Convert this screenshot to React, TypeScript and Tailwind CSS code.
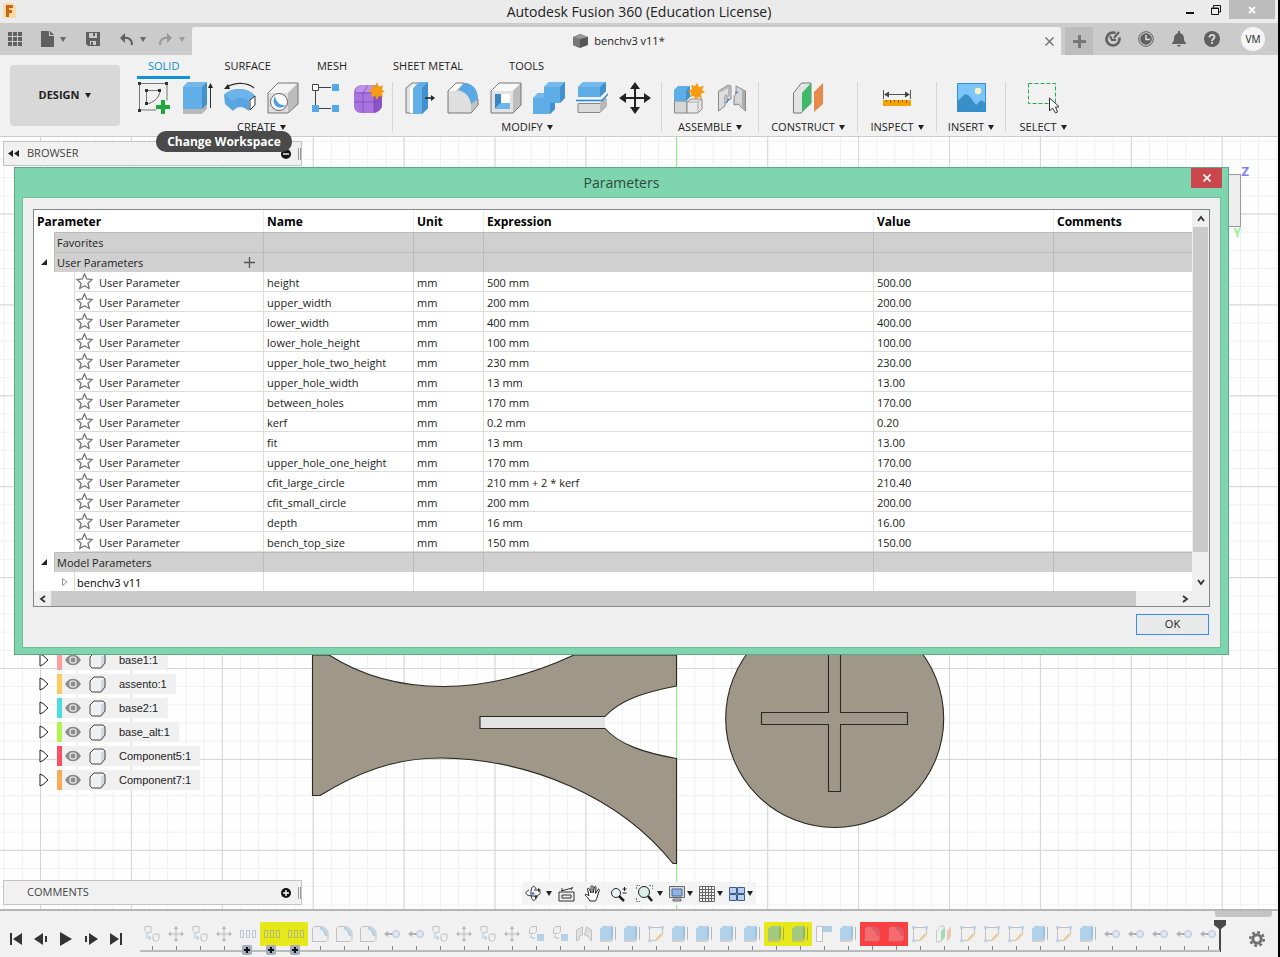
import React from "react";
import type { ReactNode } from "react";

/* ---------- data ---------- */

type Param = { name: string; expression: string; value: string };

const userParameters: Param[] = [
  { name: "height", expression: "500 mm", value: "500.00" },
  { name: "upper_width", expression: "200 mm", value: "200.00" },
  { name: "lower_width", expression: "400 mm", value: "400.00" },
  { name: "lower_hole_height", expression: "100 mm", value: "100.00" },
  { name: "upper_hole_two_height", expression: "230 mm", value: "230.00" },
  { name: "upper_hole_width", expression: "13 mm", value: "13.00" },
  { name: "between_holes", expression: "170 mm", value: "170.00" },
  { name: "kerf", expression: "0.2 mm", value: "0.20" },
  { name: "fit", expression: "13 mm", value: "13.00" },
  { name: "upper_hole_one_height", expression: "170 mm", value: "170.00" },
  { name: "cfit_large_circle", expression: "210 mm + 2 * kerf", value: "210.40" },
  { name: "cfit_small_circle", expression: "200 mm", value: "200.00" },
  { name: "depth", expression: "16 mm", value: "16.00" },
  { name: "bench_top_size", expression: "150 mm", value: "150.00" },
];

const components = [
  { name: "base1:1", color: "bg-[#ff9d9f]" },
  { name: "assento:1", color: "bg-[#ffcb5c]" },
  { name: "base2:1", color: "bg-[#4bdbe0]" },
  { name: "base_alt:1", color: "bg-[#b2f24e]" },
  { name: "Component5:1", color: "bg-[#fb5064]" },
  { name: "Component7:1", color: "bg-[#fbab55]" },
];

/* ---------- small pieces ---------- */

const Caret = ({ className = "text-[#222]" }: { className?: string }) => (
  <svg className={className} width="6" height="5" viewBox="0 0 6 5" aria-hidden="true">
    <path d="M0 0h6L3 5z" fill="currentColor" />
  </svg>
);

const Icon = ({ children }: { children: ReactNode }) => (
  <svg width="32" height="32" viewBox="0 0 32 32" fill="none" aria-hidden="true">
    {children}
  </svg>
);

/* ---------- ribbon icons ---------- */

const SketchIcon = () => (
  <Icon>
    <path d="M2 1.500h27v17M1.500 2v26h17M8 8.500h14M8.500 8v14" stroke="#777" />
    <path d="M22 8c0 7-6 13-14 14" stroke="#666" />
    <path d="M0 0h3v3H0zM27 0h3v3h-3zM0 27h3v3H0zM7 7h3v3H7zM20 7h3v3h-3zM7 20h3v3H7z" fill="#333" />
    <path d="M23 18h4v5h5v4h-5v5h-4v-5h-5v-4h5z" fill="#1fa83c" />
  </Icon>
);
const ExtrudeIcon = () => (
  <Icon>
    <path d="M2 26h19l5-5v6l-5 5H2z" fill="#b9b9b9" />
    <path d="M2 5l5-5h19v22l-5 5H2z" fill="#62aee6" />
    <path d="M2 5l5-5h19l-5 5z" fill="#75b8ea" />
    <path d="M21 5l5-5v22l-5 5z" fill="#4291cc" />
    <path d="M29.500 3v23" stroke="#333" />
    <path d="M27 6l2.500-5L32 6z" fill="#222" />
  </Icon>
);
const RevolveIcon = () => (
  <Icon>
    <path d="M0 13c8-8 24-8 31 1l-6 5v10l-3-2c-4-3-9-3-13 2L1 22z" fill="#58a6df" />
    <path d="M0 13c8-8 24-8 31 1l-6 5c-5-4-12-4-16 0z" fill="#6cb3e9" />
    <path d="M26 18l5-4v9l-5 5z" fill="#fff" stroke="#333" />
    <path d="M3 5C11 0 23 0 30 6" stroke="#333" strokeWidth="1.200" />
    <path d="M0 7l4-5 2 5z" fill="#222" />
  </Icon>
);
const HoleIcon = () => (
  <Icon>
    <path d="M1 11L11 1h20v21L21 31H1z" fill="#dedede" />
    <path d="M1 11L11 1h20L21 11z" fill="#f3f3f3" />
    <path d="M21 11L31 1v21L21 31z" fill="#bcbcbc" />
    <path d="M1 11L11 1h20v21L21 31H1z" stroke="#777" />
    <circle cx="12" cy="20" r="8.500" fill="#fff" stroke="#666" />
    <path d="M8 14a7 7 0 1 0 11 9c-6 1-10-3-11-9z" fill="#4c9fdc" />
  </Icon>
);
const PatternIcon = () => (
  <Icon>
    <path d="M9 5.500h12M9 26.500h12M5.500 9v14" stroke="#444" />
    <path d="M2.500 2.500h6v6h-6z" fill="#fff" stroke="#444" />
    <path d="M22 2h7v7h-7zM2 23h7v7H2zM22 23h7v7h-7z" fill="#55a7e6" />
  </Icon>
);
const FormIcon = () => (
  <Icon>
    <path d="M1 10c0-4 4-7 8-7h13c4 0 7 3 7 7v13c0 4-4 8-9 8H8c-4 0-7-3-7-7z" fill="#a873de" />
    <path d="M2 10c1-4 4-7 8-7h12l-3 7z" fill="#bd92ea" />
    <path d="M21 12l8-4v15c0 4-4 7-8 8z" fill="#8a53c8" />
    <path d="M1 20h20l8-5M10 11v20M21 11v20M2 11h19l5-5M10 11l5-8" stroke="#7c49b8" strokeWidth=".7" />
    <path d="M24 0l2 5 4-2-1 5 3 1-3 2 1 4-4-1-2 4-2-4-4 1 1-4-4-2 4-1-1-5 4 2z" fill="#f59b14" />
  </Icon>
);
const PressPullIcon = () => (
  <Icon>
    <path d="M2 6l6-5h9v30H2z" fill="#e3e3e3" stroke="#777" />
    <path d="M6 7l5-6v30H6z" fill="#fff" />
    <path d="M9 6l7-6h8v26l-6 6H9z" fill="#62aee6" />
    <path d="M18 6l6-6v26l-6 6z" fill="#4291cc" />
    <path d="M21 16h7" stroke="#222" strokeWidth="1.500" />
    <path d="M27 13l4 3-4 3z" fill="#222" />
  </Icon>
);
const FilletIcon = () => (
  <Icon>
    <path d="M1 9l8-8h8c8 0 14 7 14 16v6l-7 8H1z" fill="#c4c4c4" />
    <path d="M1 9h8c9 0 15 6 15 14v8H1z" fill="#dfdfdf" />
    <path d="M9 1h8L9 9H1z" fill="#fafafa" />
    <path d="M17 1c9 0 14 7 14 16l-7 5C23 15 18 9 11 8z" fill="#5aa9e4" />
    <path d="M17 1H9L1 9v22h23l7-8v-6" stroke="#777" />
  </Icon>
);
const ShellIcon = () => (
  <Icon>
    <path d="M1 9l8-8h22v22l-8 8H1z" fill="#e2e2e2" />
    <path d="M1 9l8-8h22l-8 8z" fill="#f8f8f8" />
    <path d="M23 9l8-8v22l-8 8z" fill="#bdbdbd" />
    <path d="M1 9l8-8h22v22l-8 8H1z" stroke="#777" />
    <path d="M5 12h15v15H5z" fill="#fff" />
    <path d="M5 12h6v9l-6 6z" fill="#3a86c4" />
    <path d="M5 27l6-6h9v6z" fill="#6db6ec" />
  </Icon>
);
const CombineIcon = () => (
  <Icon>
    <path d="M0 16l5-5h6V5l5-5h16v16l-5 5h-5v6l-5 5H0z" fill="#5fade7" />
    <path d="M0 16l5-5h6v5zM11 5l5-5h16l-5 5z" fill="#74b9ec" />
    <path d="M27 5l5-5v16l-5 5zM17 21h5v6l-5 5z" fill="#4291cc" />
  </Icon>
);
const SplitIcon = () => (
  <Icon>
    <path d="M2 5l5-5h23v9l-6 6H2z" fill="#5fade7" />
    <path d="M2 5l5-5h23l-6 5z" fill="#74b9ec" />
    <path d="M24 5l6-5v9l-6 6z" fill="#4291cc" />
    <path d="M0 18.500h26L32 12" stroke="#1b86dc" strokeWidth="1.300" />
    <path d="M2 21.500h22l6-5v8l-6 6H2z" fill="#dadada" stroke="#888" />
    <path d="M24 21.500l6-5v8l-6 6z" fill="#b8b8b8" />
  </Icon>
);
const MoveIcon = () => (
  <Icon>
    <path d="M16 4v24M4 16h24" stroke="#222" strokeWidth="2" />
    <path d="M16 0l5 7H11zM16 32l5-7H11zM0 16l7-5v10zM32 16l-7-5v10z" fill="#222" />
  </Icon>
);
const NewComponentIcon = () => (
  <Icon>
    <path d="M1.500 19v12H14V19z" fill="#d5d5d5" stroke="#888" />
    <path d="M14 20l4-3h11v10l-4 4H14z" fill="#e8e8e8" stroke="#888" />
    <path d="M14 20h11l4-3M25 20v11" stroke="#aaa" />
    <path d="M1 8l4-4h12v11l-4 4H1z" fill="#5fade7" />
    <path d="M13 8l4-4v11l-4 4z" fill="#4291cc" />
    <path d="M24 1l2 4 5-1-2 4 3 2-4 2 1 4-4-1-2 3-2-4-4 1 1-4-3-2 4-2-1-4 4 1z" fill="#f59b14" />
  </Icon>
);
const JointIcon = () => (
  <Icon>
    <path d="M2.500 9L12 3l3 1v13l-4 1v-4c0-2-2-1-2 1v9l-6.500 5z" fill="#dedede" stroke="#888" />
    <path d="M5 10l7-4v9l3-1V4l-3-1-9 6z" fill="#b5b5b5" />
    <path d="M29.500 9L20 4v8c-1 1-2 2-2 4v7l4-1 7.500 7z" fill="#d5d5d5" stroke="#888" />
    <path d="M26 8v18l3 3V9z" fill="#adadad" />
    <path d="M13 17l-3 4M19 11l3-1" stroke="#3879dc" strokeWidth="1.300" />
  </Icon>
);
const PlaneIcon = () => (
  <Icon>
    <path d="M1.500 11l8-10H19v20L9 31H1.500z" fill="#e4e4e4" stroke="#777" />
    <path d="M10 11l9-10v21l-9 8z" fill="#3fba68" />
    <path d="M22 10l9-9v21l-9 8z" fill="#e58a4b" />
  </Icon>
);
const MeasureIcon = () => (
  <Icon>
    <path d="M2.500 8v9M29.500 8v9M4 12.500h24" stroke="#555" />
    <path d="M3 12.500l5-3v6zM29 12.500l-5-3v6z" fill="#444" />
    <path d="M2 18h28v6H2z" fill="#f5a300" />
    <path d="M5.500 18v2M9.500 18v3M13.500 18v2M17.500 18v3M21.500 18v2M25.500 18v3" stroke="#8a5a00" />
  </Icon>
);
const InsertImageIcon = () => (
  <Icon>
    <path d="M2 1h29v29H2z" fill="#7cc5fb" />
    <circle cx="23" cy="9" r="3.200" fill="#fff2b8" />
    <path d="M2 19l4-3c4-5 6-5 10 0l5 7 3-3c2-2 3-2 5 0l2 2v8H2z" fill="#3990c8" />
    <path d="M2.500 1.500h28v28h-28z" stroke="#2f8fd0" />
  </Icon>
);
const SelectIcon = () => (
  <Icon>
    <path d="M1.500 1.500h27v20h-27z" stroke="#27a94f" strokeDasharray="4 2" />
    <path d="M22.500 16v13l3-3 3 5 2-1-2-5h4z" fill="#fff" stroke="#333" />
  </Icon>
);

/* ---------- title bar and tabs ---------- */

function TitleBar() {
  return (
    <header className="relative flex h-[23px] items-center justify-center bg-[#ebebeb]">
      <svg className="absolute left-[2px] top-[3px]" width="15" height="15" viewBox="0 0 15 15" aria-hidden="true">
        <path d="M1 0h10l3 3v12H1z" fill="#fbd9a8" />
        <path d="M4 2h7v3H7v2h3v3H7v4H4z" fill="#c8650d" />
      </svg>
      <h1 className="text-[14px] text-[#222]">Autodesk Fusion 360 (Education License)</h1>
      <div className="absolute right-[3px] top-0 flex h-[19px] items-center">
        <button aria-label="Minimize" className="flex h-full w-[26px] items-center justify-center">
          <svg width="8" height="10" viewBox="0 0 8 10"><path d="M0 7h8v2H0z" fill="#111" /></svg>
        </button>
        <button aria-label="Restore" className="flex h-full w-[26px] items-center justify-center">
          <svg width="10" height="10" viewBox="0 0 10 10" fill="none" stroke="#111"><path d="M.5 3h7v6.500h-7zM.5 3.500h7M2.500 2.500v-2h7v6.500h-2" /></svg>
        </button>
        <button aria-label="Close window" className="flex h-full w-[46px] items-center justify-center bg-[#bbb]">
          <svg width="8" height="8" viewBox="0 0 8 8" stroke="#fff" strokeWidth="1.800"><path d="M1 1l6 6M7 1L1 7" /></svg>
        </button>
      </div>
    </header>
  );
}

function TabBar() {
  return (
    <div className="flex h-8 items-stretch bg-[#cbcbcb] text-[#666]">
      <div className="flex w-48 items-center pl-2">
        <button aria-label="Data panel">
          <svg width="14" height="14" viewBox="0 0 14 14" fill="#606060">
            <path d="M0 0h4v4H0zM5 0h4v4H5zM10 0h4v4h-4zM0 5h4v4H0zM5 5h4v4H5zM10 5h4v4h-4zM0 10h4v4H0zM5 10h4v4H5zM10 10h4v4h-4z" />
          </svg>
        </button>
        <button aria-label="File" className="ml-[19px] flex items-center gap-[6px]">
          <svg width="13" height="16" viewBox="0 0 13 16" fill="#606060"><path d="M0 0h8v5h5v11H0zM9 0l4 4H9z" /></svg>
          <Caret className="text-[#666]" />
        </button>
        <button aria-label="Save" className="ml-5">
          <svg width="14" height="14" viewBox="0 0 14 14" fill="#606060">
            <path fillRule="evenodd" d="M0 0h14v14H2l-2-2zM3 1v5h8V1zM4 9v4h6V9zM5 10h2v3H5z" />
            <path d="M7 1h2v3H7z" />
          </svg>
        </button>
        <button aria-label="Undo" className="ml-5 flex items-center gap-[7px]">
          <svg width="13" height="13" viewBox="0 0 13 13" fill="none"><path d="M3 5c5-1 9 1 9 7" stroke="#606060" strokeWidth="2" /><path d="M0 5l5-5v10z" fill="#606060" /></svg>
          <Caret className="text-[#666]" />
        </button>
        <button aria-label="Redo" className="ml-[13px] flex items-center gap-[7px]">
          <svg width="13" height="13" viewBox="0 0 13 13" fill="none"><path d="M10 5C5 4 1 6 1 12" stroke="#999" strokeWidth="2" /><path d="M13 5L8 0v10z" fill="#999" /></svg>
          <Caret className="text-[#999]" />
        </button>
      </div>
      <div className="relative mt-1 flex flex-1 items-center justify-center gap-[6px] rounded-t-[3px] bg-[#f1f1f1] pr-[15px] text-[11px] text-[#222]">
        <svg width="15" height="14" viewBox="0 0 15 14" aria-hidden="true">
          <path d="M0 3l7-3 8 3v8l-8 3-7-3z" fill="#555" /><path d="M0 3l7 2v9l-7-3z" fill="#777" /><path d="M0 3l7-3 8 3-8 2z" fill="#999" />
        </svg>
        <span>benchv3 v11*</span>
        <button aria-label="Close document" className="absolute right-[7px] top-[10px]">
          <svg width="9" height="9" viewBox="0 0 9 9" stroke="#777" strokeWidth="1.500"><path d="M.5.5l8 8M8.500.5l-8 8" /></svg>
        </button>
      </div>
      <button aria-label="New document" className="ml-1 mt-1 flex w-7 items-center justify-center bg-[#bdbdbd]">
        <svg width="13" height="13" viewBox="0 0 13 13"><path d="M5 0h3v5h5v3H8v5H5V8H0V5h5z" fill="#777" /></svg>
      </button>
      <div className="flex items-center gap-[17px] pl-3 pr-[13px]">
        <button aria-label="Job status">
          <svg width="16" height="16" viewBox="0 0 16 16" fill="none"><path d="M10.500 2A6.500 6.500 0 1 0 14.300 6.500" stroke="#606060" strokeWidth="2.600" /><path d="M14 1L9 7M5 5l2 4h4" stroke="#606060" strokeWidth="2" /></svg>
        </button>
        <button aria-label="Extensions">
          <svg width="16" height="16" viewBox="0 0 16 16" fill="none"><circle cx="8" cy="8" r="7.300" stroke="#606060" /><circle cx="8" cy="8" r="5.800" fill="#606060" /><path d="M8 4v4.500h4" stroke="#ddd" strokeWidth="1.500" /></svg>
        </button>
        <button aria-label="Notifications">
          <svg width="16" height="16" viewBox="0 0 16 16" fill="#606060"><path d="M7 0h2v2c3 1 4 3 4 6 0 2 1 3 2 4v1H1v-1c1-1 2-2 2-4 0-3 1-5 4-6zM6 14h4c0 2-4 2-4 0z" /></svg>
        </button>
        <button aria-label="Help">
          <svg width="16" height="16" viewBox="0 0 16 16" fill="none"><circle cx="8" cy="8" r="8" fill="#606060" /><path d="M5.500 6.500C5.500 3 10.500 3 10.500 6c0 2-2.500 2-2.500 4M8 11v2" stroke="#ddd" strokeWidth="1.800" /></svg>
        </button>
        <button className="ml-1 flex size-6 items-center justify-center rounded-full bg-[#f5f5f5] text-[10px] text-[#222]">VM</button>
      </div>
    </div>
  );
}

/* ---------- ribbon ---------- */

type Group = { label: string; width: string; icons: { name: string; icon: ReactNode }[] };

const groups: Group[] = [
  {
    label: "CREATE",
    width: "w-[262px]",
    icons: [
      { name: "Create Sketch", icon: <SketchIcon /> },
      { name: "Extrude", icon: <ExtrudeIcon /> },
      { name: "Revolve", icon: <RevolveIcon /> },
      { name: "Hole", icon: <HoleIcon /> },
      { name: "Pattern", icon: <PatternIcon /> },
      { name: "Create Form", icon: <FormIcon /> },
    ],
  },
  {
    label: "MODIFY",
    width: "w-[269px]",
    icons: [
      { name: "Press Pull", icon: <PressPullIcon /> },
      { name: "Fillet", icon: <FilletIcon /> },
      { name: "Shell", icon: <ShellIcon /> },
      { name: "Combine", icon: <CombineIcon /> },
      { name: "Split Body", icon: <SplitIcon /> },
      { name: "Move", icon: <MoveIcon /> },
    ],
  },
  {
    label: "ASSEMBLE",
    width: "w-[97px]",
    icons: [
      { name: "New Component", icon: <NewComponentIcon /> },
      { name: "Joint", icon: <JointIcon /> },
    ],
  },
  { label: "CONSTRUCT", width: "w-[99px]", icons: [{ name: "Offset Plane", icon: <PlaneIcon /> }] },
  { label: "INSPECT", width: "w-[79px]", icons: [{ name: "Measure", icon: <MeasureIcon /> }] },
  { label: "INSERT", width: "w-[69px]", icons: [{ name: "Insert Image", icon: <InsertImageIcon /> }] },
  { label: "SELECT", width: "w-[74px]", icons: [{ name: "Select", icon: <SelectIcon /> }] },
];

function Ribbon() {
  return (
    <div className="flex h-[82px] border-b border-[#ccc] bg-[#f1f1f1] text-[11px] text-[#222]">
      <button className="ml-[10px] mt-[10px] flex h-[61px] w-[110px] items-center justify-center gap-[6px] rounded-[4px] bg-[#d8d8d8] font-bold">
        DESIGN <Caret />
      </button>
      <div className="flex flex-col">
        <nav className="ml-[17px] flex h-6 gap-[22px]">
          {["SOLID", "SURFACE", "MESH", "SHEET METAL", "TOOLS"].map((t) => (
            <a
              key={t}
              href="#"
              className={
                t === "SOLID"
                  ? "flex items-center border-b-[3px] border-[#1193dc] px-[11px] pt-[2px] text-[#0c8bd4]"
                  : "flex items-center border-b-[3px] border-transparent px-3 pt-[2px]"
              }
            >
              {t}
            </a>
          ))}
        </nav>
        <div className="ml-[11px] flex pt-[3px]">
          {groups.map((g, i) => (
            <section
              key={g.label}
              className={`${g.width} flex h-[50px] flex-col items-center ${i < groups.length - 1 ? "border-r border-[#d6d6d6]" : ""}`}
            >
              <div className="flex">
                {g.icons.map((ic) => (
                  <button key={ic.name} aria-label={ic.name} className="flex w-[43px] justify-center">
                    {ic.icon}
                  </button>
                ))}
              </div>
              <button className="mt-[5px] flex items-center gap-1 leading-4">
                {g.label} <Caret />
              </button>
            </section>
          ))}
        </div>
      </div>
    </div>
  );
}

/* ---------- canvas ---------- */

function Drawing() {
  return (
    <svg className="absolute inset-0 h-full w-full" aria-hidden="true">
      <defs>
        <pattern id="minor" x="40" y="76.500" width="18.180" height="18.180" patternUnits="userSpaceOnUse">
          <path d="M.5 0v18.180M0 .5h18.180" stroke="#f0f0f0" fill="none" />
        </pattern>
        <pattern id="major" x="40" y="76.500" width="90.900" height="90.900" patternUnits="userSpaceOnUse">
          <path d="M.5 0v90.900M0 .5h90.900" stroke="#d4d4d4" fill="none" />
        </pattern>
      </defs>
      <rect width="100%" height="100%" fill="#fefefe" />
      <rect width="100%" height="100%" fill="url(#minor)" />
      <rect width="100%" height="100%" fill="url(#major)" />
      <rect x="676" y="0" width="1" height="100%" fill="#8df08d" />
      <path d="M480 579.500h125v12H480z" fill="#e3e3e3" />
      <g transform="translate(0 -137)" stroke="#2b2823" strokeWidth="1.100">
        <path
          d="M312.500 655H329C362 676 400 686.500 443 686.500C487 686.500 533 674 574 655h102.500v31C645 692 620 700 605 716.500H480v12h125C620 745 645 753 676.500 758.500V863.500H673C620 797 530 759 441 758C395 758 358 772 320 795.500h-7.500z"
          fill="#9f9888"
        />
        <circle cx="834.700" cy="718.500" r="109" fill="#9f9888" />
        <path d="M828.500 640h12v72.500h67v12h-67v67h-12v-67h-67v-12h67z" fill="#9f9888" />
      </g>
    </svg>
  );
}

function TreeRow({ name, color }: { name: string; color: string }) {
  return (
    <li className="flex h-6 items-center">
      <button aria-label={`Expand ${name}`} className="w-[18px]">
        <svg width="10" height="14" viewBox="0 0 10 14"><path d="M1 1v12l3-1.500L9 7 4 2.500z" fill="#fff" stroke="#222" /></svg>
      </button>
      <span className={`h-5 w-[5px] ${color}`} />
      <div className="flex h-5 items-center bg-[#f0f0f0] pr-[9px]">
        <button aria-label={`Toggle visibility of ${name}`} className="ml-[3px]">
          <svg width="16" height="12" viewBox="0 0 16 12" fill="none">
            <path d="M0 6c4-7 12-7 16 0-4 7-12 7-16 0z" fill="#8b8b8b" /><circle cx="8" cy="6" r="3.800" fill="#e4e4e4" /><circle cx="8" cy="6" r="2.400" fill="#8b8b8b" />
          </svg>
        </button>
        <svg className="ml-2" width="17" height="17" viewBox="0 0 17 17" aria-hidden="true">
          <path d="M1 5l4-4h9l2 2v8l-4 5H3l-2-2z" fill="#eef0f3" /><path d="M12 5l4-3v9l-4 5z" fill="#d3d8df" />
          <path d="M1 5l4-4h9l2 2v8l-4 5H3l-2-2z" fill="none" stroke="#444" />
        </svg>
        <span className="ml-[13px] font-['Liberation_Sans',sans-serif] text-[11px] text-[#222]">{name}</span>
      </div>
    </li>
  );
}

function PanelHeader({ title, collapsed }: { title: string; collapsed: boolean }) {
  return (
    <div className="ml-[3px] flex h-[25px] w-[299px] items-center border border-[#c4c4c4] bg-[#f1f1f1] text-[11px] text-[#444]">
      <span className="flex w-[23px] pl-1">
        {!collapsed && <svg width="11" height="7" viewBox="0 0 11 7"><path d="M5 0v7L0 3.500zM11 0v7L6 3.500z" fill="#222" /></svg>}
      </span>
      <span>{title}</span>
      <button aria-label={`Toggle ${title}`} className="ml-auto">
        <svg width="10" height="10" viewBox="0 0 10 10">
          <circle cx="5" cy="5" r="5" fill="#111" />
          <path d={collapsed ? "M5 2v6M2 5h6" : "M2 5h6"} stroke="#fff" strokeWidth="1.400" />
        </svg>
      </button>
      <span className="ml-[7px] h-3 w-[3px] border-x border-[#999]" />
    </div>
  );
}

function NavBar() {
  return (
    <div className="flex h-[23px] items-center gap-[6px] bg-[#f3f3f3] px-[3px]">
      <button aria-label="Orbit" className="flex items-center gap-1">
        <svg width="17" height="17" viewBox="0 0 17 17" fill="none" stroke="#333"><path d="M11 4C9-1 6 1 6 8s3 10 5 5M4 5C-1 7 0 11 8 11s9-4 5-6H9" /><path d="M8 7v3M6.500 8.500h3" stroke="#2a6fd0" /><path d="M13 3v4l3-2zM9 11h4l-2 3z" fill="#333" stroke="none" /></svg>
        <Caret />
      </button>
      <button aria-label="Look At" className="flex">
        <svg width="17" height="16" viewBox="0 0 17 16" fill="none" stroke="#333"><path d="M1 6h15v9H1z" fill="#eee" /><path d="M4 9h9v3H4zM3 5l11-3M4 5V2M13 4l2-3" /></svg>
      </button>
      <button aria-label="Pan" className="ml-[3px] flex">
        <svg width="17" height="17" viewBox="0 0 17 17" fill="#fff" stroke="#222">
          <path d="M6 16c-1-2-3-4-5-6 0-1 2-1 4 1L3.500 4c0-1 1.500-1 2 0L7 8V1.500c0-1 1.800-1 2 0V8l1.500-6c.3-1 1.700-.8 1.500.3L11.500 8.500 14 4.500c.6-.8 1.700-.2 1.300.8L13.500 11c-.5 2-1 3-2 5z" />
        </svg>
      </button>
      <button aria-label="Zoom" className="ml-[3px] flex">
        <svg width="17" height="16" viewBox="0 0 17 16" fill="none" stroke="#222"><circle cx="6" cy="7" r="4.500" fill="#eef6f6" /><path d="M9 10l5 5" strokeWidth="2.500" /><path d="M14.500 1v4M12.500 3h4M12.500 7h4" /></svg>
      </button>
      <button aria-label="Fit" className="ml-[3px] flex items-center gap-1">
        <svg width="17" height="17" viewBox="0 0 17 17" fill="none" stroke="#222"><path d="M.5 4V.500H4M13 .5h3.500V4M.5 13v3.500H4" stroke="#777" strokeDasharray="2 1" /><circle cx="8" cy="7" r="5.500" fill="#dcefe9" /><path d="M12 11l4 5" strokeWidth="2.500" /></svg>
        <Caret />
      </button>
      <button aria-label="Display Settings" className="flex items-center gap-[2px]">
        <svg width="16" height="16" viewBox="0 0 16 16" fill="none" stroke="#666"><path d="M.5.5h15v11H.5z" fill="#ddd" /><path d="M3 3h10v7H3z" fill="#8fb3e2" stroke="#46679a" /><path d="M4 13h8v2H4z" fill="#ccc" /></svg>
        <Caret />
      </button>
      <button aria-label="Grid and Snaps" className="flex items-center gap-[2px]">
        <svg width="16" height="16" viewBox="0 0 16 16" fill="none" stroke="#666"><path d="M.5.5h15v15H.5zM3.500 0v16M6.500 0v16M9.500 0v16M12.500 0v16M0 3.500h16M0 6.500h16M0 9.500h16M0 12.500h16" /></svg>
        <Caret />
      </button>
      <button aria-label="Viewports" className="flex items-center gap-[2px]">
        <svg width="16" height="14" viewBox="0 0 16 14" fill="#b9cfed" stroke="#3b5b8c"><path d="M.5.5h7v6h-7zM8.500.5h7v6h-7zM.5 7.500h7v6h-7zM8.500 7.500h7v6h-7z" /></svg>
        <Caret />
      </button>
    </div>
  );
}

/* ---------- parameters dialog ---------- */

const cell = "overflow-hidden border-b border-r border-[#dcdcdc] pb-0 pl-[3px] pr-0 pt-[2px] whitespace-nowrap";

function EmptyCells({ tone }: { tone: string }) {
  return (
    <>
      <td className={tone} />
      <td className={tone} />
      <td className={tone} />
      <td className={tone} />
      <td className={tone} />
    </>
  );
}

function GroupRow({ label, expandable, addable }: { label: string; expandable?: boolean; addable?: boolean }) {
  return (
    <tr className="h-5">
      <td className="border-r border-[#bbb] p-0">
        <div className="flex h-5">
          <span className="flex w-5 items-center justify-center">
            {expandable && (
              <svg width="6" height="6" viewBox="0 0 6 6"><path d="M6 0v6H0z" fill="#222" /></svg>
            )}
          </span>
          <div className="flex flex-1 items-center justify-between border-l border-t border-[#bbb] bg-[#d0d0d0] pl-[2px] pr-2">
            {label}
            {addable && (
              <button aria-label="Add user parameter">
                <svg width="11" height="11" viewBox="0 0 11 11" stroke="#555" strokeWidth="1.300"><path d="M5.500 0v11M0 5.500h11" /></svg>
              </button>
            )}
          </div>
        </div>
      </td>
      <EmptyCells tone="border-r border-t border-[#bbb] bg-[#d0d0d0] last:border-r-0" />
    </tr>
  );
}

function ParametersTable() {
  return (
    <table className="w-full table-fixed border-separate border-spacing-0 text-[11px] leading-4 text-[#222]">
      <colgroup>
        <col className="w-[230px]" />
        <col className="w-[150px]" />
        <col className="w-[70px]" />
        <col className="w-[390px]" />
        <col className="w-[180px]" />
        <col />
      </colgroup>
      <thead>
        <tr className="h-[22px] text-left text-[12px] text-black">
          {["Parameter", "Name", "Unit", "Expression", "Value", "Comments"].map((h) => (
            <th key={h} className="border-r border-[#e6ecf2] px-[3px] pb-0 pt-[2px] font-bold last:border-r-0">{h}</th>
          ))}
        </tr>
      </thead>
      <tbody>
        <GroupRow label="Favorites" />
        <GroupRow label="User Parameters" expandable addable />
        {userParameters.map((p) => (
          <tr key={p.name} className="h-5">
            <td className="border-r border-[#dcdcdc] p-0 pl-10">
              <div className="flex h-5 items-center border-b border-l border-[#dcdcdc]">
                <button aria-label={`Favorite ${p.name}`} className="ml-[1px]">
                  <svg width="17" height="17" viewBox="0 0 17 17"><path d="M8.500 1l2.200 5 5.300.6-4 3.600 1.200 5.300-4.700-2.800-4.700 2.800L5 10.200 1 6.600 6.300 6z" fill="#fff" stroke="#777" strokeWidth="1.300" /></svg>
                </button>
                <span className="ml-[6px] pt-[2px]">User Parameter</span>
              </div>
            </td>
            <td className={cell}>{p.name}</td>
            <td className={cell}>mm</td>
            <td className={cell}>{p.expression}</td>
            <td className={cell}>{p.value}</td>
            <td className="border-b border-[#dcdcdc]" />
          </tr>
        ))}
        <GroupRow label="Model Parameters" expandable />
        <tr className="h-[19px]">
          <td className="border-r border-[#dcdcdc] p-0">
            <div className="flex h-[19px] items-center pl-7 text-black">
              <button aria-label="Expand benchv3 v11" className="w-3">
                <svg width="6" height="8" viewBox="0 0 6 8"><path d="M.5.5v7L5 4z" fill="#fff" stroke="#999" /></svg>
              </button>
              <span className="flex h-full items-center border-l border-[#dcdcdc] pl-[2px] pt-[2px]">benchv3 v11</span>
            </div>
          </td>
          <EmptyCells tone="border-r border-[#dcdcdc] last:border-r-0" />
        </tr>
      </tbody>
    </table>
  );
}

const Chevron = ({ d }: { d: string }) => (
  <svg width="8" height="8" viewBox="0 0 8 8" fill="none" stroke="#333" strokeWidth="1.800"><path d={d} /></svg>
);

function ParametersDialog() {
  return (
    <div
      role="dialog"
      aria-labelledby="parameters-title"
      className="absolute left-[14px] right-[49px] top-[30px] border border-[#5fa887] bg-[#80d5b1] px-[7px] pb-[6px]"
    >
      <div className="relative flex h-[29px] items-center justify-center">
        <h2 id="parameters-title" className="text-[14px] text-[#2d4a3d]">Parameters</h2>
        <button aria-label="Close" className="absolute -right-[1px] top-0 flex h-5 w-[31px] items-center justify-center bg-[#c9474d]">
          <svg width="8" height="8" viewBox="0 0 8 8" stroke="#fff" strokeWidth="1.600"><path d="M.5.5l7 7M7.500.5l-7 7" /></svg>
        </button>
      </div>
      <div className="border border-[#74bb9c] bg-[#efefef] px-[10px] pb-3 pt-[11px]">
        <div className="border border-[#828790] bg-white">
          <div className="flex">
            <div className="min-w-0 flex-1">
              <ParametersTable />
            </div>
            <div className="flex w-[17px] flex-col items-center bg-[#efefef]">
              <button aria-label="Scroll up" className="flex h-[17px] items-center"><Chevron d="M1 6l3-4 3 4" /></button>
              <div className="w-[15px] flex-1 bg-[#cacaca]" />
              <button aria-label="Scroll down" className="mt-5 flex h-[19px] items-center"><Chevron d="M1 2l3 4 3-4" /></button>
            </div>
          </div>
          <div className="flex h-[15px] items-center bg-[#efefef]">
            <button aria-label="Scroll left" className="flex w-[17px] justify-center"><Chevron d="M6 1L2 4l4 3" /></button>
            <div className="h-[15px] flex-1 bg-[#cacaca]" />
            <button aria-label="Scroll right" className="ml-10 flex w-[17px] justify-center"><Chevron d="M2 1l4 3-4 3" /></button>
            <span className="w-4" />
          </div>
        </div>
        <div className="mt-[7px] flex justify-end pr-px">
          <button className="h-[21px] w-[73px] border border-solid border-[#2f8ffb] bg-[#e9e9e9] text-[11px] text-[#222]">OK</button>
        </div>
      </div>
    </div>
  );
}

/* ---------- timeline ---------- */

type Kind = "copy" | "move" | "pattern" | "fillet" | "joint" | "body" | "asm" | "extrude" | "sketch" | "align" | "plane";

const glyphs: Record<Kind, ReactNode> = {
  copy: (
    <g fill="none" stroke="#888"><path d="M2 1.500h6v6H3.500L2 6zM10 10.500l1.500-1.500H16v4.500L14.500 16H11l-1-1z" /><path d="M4 8v5h4M6 11l2 2-2 2" stroke="#5b9bd0" /></g>
  ),
  move: (
    <g fill="#777"><path d="M8.500 3h1v12h-1zM3 8.500h12v1H3z" /><path d="M9 1l2.500 3h-5zM9 17l2.500-3h-5zM1 9l3-2.500v5zM17 9l-3-2.500v5z" /></g>
  ),
  pattern: <g fill="#fff" fillOpacity=".3" stroke="#7d8fb0"><path d="M1.500 5.500h3v7h-3zM7.500 5.500h3v7h-3zM13.500 5.500h3v7h-3z" /></g>,
  fillet: (
    <g fill="none" stroke="#888"><path d="M1.500 3.500l2-2H9c5 0 8 3 8 8v5l-2 2H1.500z" fill="#eee" /><path d="M9 3c4 1 6 3 6 8" stroke="#6badde" strokeWidth="3" /></g>
  ),
  joint: (
    <g><path d="M1 9l4-3v2h4v2H5v2z" fill="#666" /><circle cx="13" cy="9" r="3.500" fill="#cddaf2" stroke="#6f85bb" /></g>
  ),
  body: (
    <g><path d="M2.500 3.500l2-2h5v5l-2 2h-5z" fill="#eee" stroke="#888" /><path d="M4 10v3h4" stroke="#777" fill="none" /><path d="M10 9h7v7h-7z" fill="#6aaee0" /></g>
  ),
  asm: <g fill="#ccc" stroke="#888"><path d="M1.500 5l6-3v8l-3 1v3l-3 2zM16.500 5l-5-3-2 8 3 1 4 5z" /></g>,
  extrude: (
    <g><path d="M1 14h11l2-2v3l-2 2H1z" fill="#aaa" /><path d="M1 4l3-3h10v11l-2 3H1z" fill="#60abe1" /><path d="M12 4l2-3v11l-2 3z" fill="#3d87bd" /><path d="M16.500 2v13" stroke="#777" /></g>
  ),
  sketch: (
    <g fill="none"><path d="M3 2.500h12M2.500 3v12M15.500 3v6M3 15.500h6" stroke="#888" /><path d="M1 1h3v3H1zM14 1h3v3h-3zM1 14h3v3H1z" fill="#7cb8dd" /><path d="M9 15l6-6" stroke="#e8a33a" strokeWidth="2.500" /></g>
  ),
  align: <g><path d="M1.500 1.500h6v15h-6z" fill="#fff" stroke="#888" /><path d="M8 1h9v6H8z" fill="#5fa6de" /></g>,
  plane: (
    <g><path d="M1.500 6l4-5H9v11l-4 5H1.500z" fill="#eee" stroke="#999" /><path d="M6 6l4-4v10l-4 5z" fill="#4cbd72" /><path d="M12 6l4-5v11l-4 5z" fill="#e9996b" /></g>
  ),
};

const sequence =
  "copy move copy move pattern pattern:y pattern:y fillet fillet fillet joint joint copy move copy move body body asm extrude extrude sketch extrude extrude extrude extrude extrude:y extrude:y align extrude fillet:r fillet:r sketch plane sketch sketch sketch extrude sketch extrude joint joint joint joint joint";

const steps = sequence.split(" ").map((s) => {
  const [kind, mark] = s.split(":");
  return { kind: kind as Kind, mark };
});

function Timeline() {
  const controls = [
    { name: "Go to start", d: "M1 1h2v12H1zM13 1v12L4 7z" },
    { name: "Step back", d: "M9 1v12L0 7zM11 4h2v6h-2z" },
    { name: "Play", d: "M1 0l12 7-12 7z" },
    { name: "Step forward", d: "M5 1v12l9-6zM1 4h2v6H1z" },
    { name: "Go to end", d: "M1 1v12l9-6zM11 1h2v12h-2z" },
  ];
  return (
    <footer className="relative flex h-12 items-start overflow-hidden border-t-2 border-[#b5b5b5] bg-[#f1f1f1]">
      <div className="flex w-[140px] shrink-0 gap-[11px] pl-[9px] pt-[21px]">
        {controls.map((c) => (
          <button key={c.name} aria-label={c.name}>
            <svg width="14" height="14" viewBox="0 0 14 14"><path d={c.d} fill="#333" /></svg>
          </button>
        ))}
      </div>
      <ol className="mt-[11px] flex shrink-0">
        {steps.map((s, i) => (
          <li key={i} className="flex w-6 flex-col items-center">
            <span
              className={`flex h-6 w-6 items-center justify-center ${
                s.mark === "y" ? "bg-[#e6e81a]" : s.mark === "r" ? "bg-[#fb3f43]" : ""
              }`}
            >
              <svg
                className={s.mark === "r" ? "opacity-25" : s.mark === "y" ? "opacity-50" : "opacity-45"}
                width="18"
                height="18"
                viewBox="0 0 18 18"
              >
                {glyphs[s.kind]}
              </svg>
            </span>
            <span className="relative flex h-[6px] w-full justify-center border-b-2 border-[#bbb]">
              {i >= 4 && i <= 6 ? (
                <svg className="absolute left-[6px] -top-px" width="10" height="10" viewBox="0 0 10 10"><rect width="10" height="10" rx="2" fill="#a3acbd" /><path d="M5 2v6M2 5h6" stroke="#111" strokeWidth="2" /></svg>
              ) : (
                <span className="h-1 w-px bg-[#888]" />
              )}
            </span>
          </li>
        ))}
      </ol>
      <svg className="-ml-[6px] mt-[9px] shrink-0" width="12" height="32" viewBox="0 0 12 32" aria-hidden="true">
        <path d="M0 0h12v5L7 9v23H5V9L0 5z" fill="#484848" />
      </svg>
      <button aria-label="Timeline settings" className="ml-auto mr-[13px] mt-5 shrink-0">
        <svg width="16" height="16" viewBox="0 0 16 16" fill="none">
          <circle cx="8" cy="8" r="4.200" stroke="#707070" strokeWidth="3" />
          <circle cx="8" cy="8" r="6.800" stroke="#707070" strokeWidth="2.400" strokeDasharray="2.800 2.540" />
        </svg>
      </button>
      <div className="absolute right-[6px] top-0 h-[6px] w-[57px] rounded-b-[3px] bg-[#c4c4c4]" />
    </footer>
  );
}

/* ---------- page ---------- */

export default function App() {
  return (
    <div className="flex min-h-screen flex-col border-r-2 border-black bg-white font-['Open_Sans','Noto_Sans',sans-serif]">
      <TitleBar />
      <TabBar />
      <Ribbon />
      <main className="relative flex flex-1 flex-col">
        <Drawing />
        <div className="relative pt-1">
          <PanelHeader title="BROWSER" collapsed={false} />
          <ul className="ml-[39px] mt-[482px]">
            {components.map((c) => (
              <TreeRow key={c.name} name={c.name} color={c.color} />
            ))}
          </ul>
        </div>
        <div className="relative mb-1 mt-auto grid grid-cols-[1fr_auto_1fr] items-end pt-6">
          <PanelHeader title="COMMENTS" collapsed />
          <NavBar />
          <span />
        </div>
        <div className="absolute right-[37px] top-[28px] flex text-[13px] font-bold" aria-hidden="true">
          <span className="mt-[9px] h-[53px] w-4 border border-[#999] bg-[#eee]" />
          <span className="absolute -right-[8px] -top-[3px] text-[#8080ff]">Z</span>
          <span className="absolute right-0 top-[59px] text-[12px] text-[#8df58d]">Y</span>
        </div>
        <ParametersDialog />
        <div
          role="tooltip"
          className="absolute -top-[6px] left-[156px] flex h-[21px] w-[136px] items-center justify-center rounded-[10px] bg-[#4a4a4a] text-[12px] font-bold text-white"
        >
          Change Workspace
        </div>
      </main>
      <Timeline />
    </div>
  );
}
